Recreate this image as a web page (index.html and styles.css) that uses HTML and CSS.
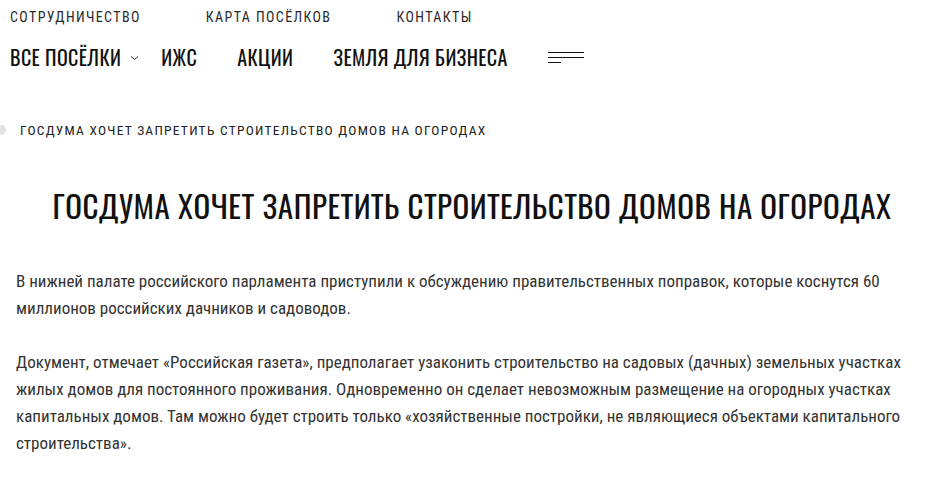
FILE: index.html
```html
<!DOCTYPE html>
<html lang="ru">
<head>
  <meta charset="UTF-8">
  <meta name="viewport" content="width=device-width, initial-scale=1.0">
  <title>Госдума хочет запретить строительство домов на огородах</title>
  <link rel="stylesheet" href="styles.css">
</head>
<body>
  <header class="header">
    <nav class="top-nav">
      <a href="#">Сотрудничество</a>
      <a href="#">Карта посёлков</a>
      <a href="#">Контакты</a>
    </nav>
    <nav class="main-nav">
      <a href="#" class="dropdown">Все посёлки
        <svg class="chevron" width="9" height="6" viewBox="0 0 9 6"><path d="M1 1.5 L4.5 4.5 L8 1.5" fill="none" stroke="#333" stroke-width="1"/></svg>
      </a>
      <a href="#">ИЖС</a>
      <a href="#">Акции</a>
      <a href="#">Земля для бизнеса</a>
      <button class="burger" aria-label="Меню">
        <span></span><span></span><span class="short"></span>
      </button>
    </nav>
  </header>

  <main class="article">
    <div class="breadcrumbs">
      <span class="home"></span>
      <span class="crumb">Госдума хочет запретить строительство домов на огородах</span>
    </div>

    <h1>Госдума хочет запретить строительство домов на огородах</h1>

    <p>В нижней палате российского парламента приступили к обсуждению правительственных поправок, которые коснутся 60 миллионов российских дачников и садоводов.</p>
    <p>Документ, отмечает «Российская газета», предполагает узаконить строительство на садовых (дачных) земельных участках жилых домов для постоянного проживания. Одновременно он сделает невозможным размещение на огородных участках капитальных домов. Там можно будет строить только «хозяйственные постройки, не являющиеся объектами капитального строительства».</p>
  </main>
</body>
</html>
```

FILE: styles.css
```css
* {
  box-sizing: border-box;
}

body {
  margin: 0;
  background: #fff;
  color: #222;
  font-family: "Roboto Condensed", Roboto, sans-serif;
  overflow: hidden;
}

a {
  color: inherit;
  text-decoration: none;
}

.header {
  padding: 0 10px;
}

.top-nav {
  display: flex;
  gap: 65px;
  height: 34px;
  align-items: center;
  font-size: 14px;
  letter-spacing: 1.4px;
  text-transform: uppercase;
  color: #2a2a2a;
}

.main-nav {
  display: flex;
  align-items: center;
  gap: 40px;
  height: 46px;
  font-family: Oswald, sans-serif;
  font-size: 20px;
  letter-spacing: 0.4px;
  text-transform: uppercase;
  color: #111;
}

.main-nav .dropdown {
  display: flex;
  align-items: center;
  gap: 9px;
  margin-right: -18px;
}

.chevron {
  margin-top: 2px;
}

.burger {
  display: flex;
  flex-direction: column;
  gap: 4px;
  width: 36px;
  padding: 0;
  border: none;
  background: none;
  cursor: pointer;
}

.burger span {
  display: block;
  height: 1px;
  width: 36px;
  background: #111;
}

.burger .short {
  width: 13px;
}

.article {
  padding: 0 16px;
}

.breadcrumbs {
  display: flex;
  align-items: center;
  gap: 14px;
  margin: 40px 0 0 -16px;
  height: 20px;
  font-size: 13.5px;
  letter-spacing: 1.25px;
  text-transform: uppercase;
  color: #222;
}

.home {
  width: 10px;
  height: 10px;
  margin-left: -4px;
  border-radius: 50%;
  background: #e2e2e2;
}

h1 {
  margin: 41px 0 39px;
  padding-left: 18px;
  text-align: center;
  white-space: nowrap;
  font-family: Oswald, sans-serif;
  font-weight: 400;
  font-size: 31px;
  line-height: 48px;
  letter-spacing: 0.55px;
  text-transform: uppercase;
  color: #111;
}

.article p {
  margin: 0 0 27px;
  max-width: 900px;
  font-size: 17px;
  line-height: 27px;
  color: #333;
}
```
